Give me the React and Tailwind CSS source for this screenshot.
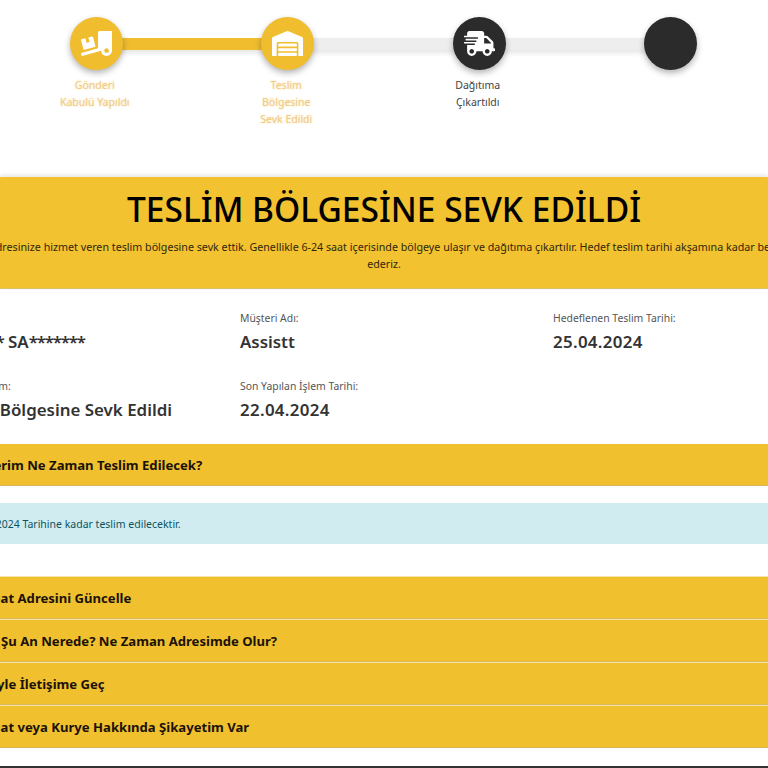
import { FaTruckLoading, FaWarehouse, FaShippingFast } from "react-icons/fa";

const font = { fontFamily: '"Noto Sans", "Open Sans", sans-serif' };

const steps = [
  { icon: FaTruckLoading, label: ["Gönderi", "Kabulü Yapıldı"], done: true },
  { icon: FaWarehouse, label: ["Teslim", "Bölgesine", "Sevk Edildi"], done: true },
  { icon: FaShippingFast, label: ["Dağıtıma", "Çıkartıldı"], done: false },
  { label: [], done: false },
];

const Field = ({ label, value }) => (
  <div className="h-[68px] whitespace-nowrap">
    <div className="text-[10.4px] leading-[18px] text-[#555]">{label}</div>
    <div className="mt-[3px] text-[16.9px] leading-[24px] font-semibold text-[#333]">{value}</div>
  </div>
);

const Row = ({ children, lower }) => (
  <div
    className={`bg-[#f0c02f] border-b border-[#d9b75a] pt-[2px] flex items-center text-[13.1px] font-bold text-[#1c1208] whitespace-nowrap ${
      lower ? "h-[43px] border-t border-t-[#f6e3a6]" : "h-[42px]"
    }`}
  >
    <span className="ml-[-41px]">{children}</span>
  </div>
);

export default function App() {
  return (
    <div className="h-[768px] w-full overflow-hidden bg-white" style={font}>
      <div className="h-[177px] pt-[17px] flex">
        <div className="relative flex ml-[0.5px]">
          {steps.map((step, i) => (
            <div key={i} className="relative w-[191.5px] flex flex-col items-center">
              {i < 3 && (
                <div
                  className={`absolute left-[95px] top-[21px] h-[12px] w-[191.5px] shadow-[0_3px_5px_rgba(0,0,0,0.1)] ${
                    i < 1 ? "bg-[#f0bd2f]" : "bg-[#eeeeee]"
                  }`}
                />
              )}
              <div
                className={`relative w-[53px] h-[53px] rounded-full flex items-center justify-center text-white shadow-[0_3px_6px_rgba(0,0,0,0.3)] ${
                  step.done ? "bg-[#f0bd2f]" : "bg-[#2b2b2b]"
                }`}
              >
                {step.icon && <step.icon className="w-[31px] h-[31px]" />}
              </div>
              <div
                className={`mt-[7px] mr-[3px] text-center text-[10.5px] leading-[17px] ${
                  step.done
                    ? "text-[#f1cb85] [text-shadow:0_0_2px_rgba(240,190,60,0.5)]"
                    : "text-[#444]"
                }`}
              >
                {step.label.map((line) => (
                  <div key={line}>{line}</div>
                ))}
              </div>
            </div>
          ))}
        </div>
      </div>

      <div className="h-[112px] bg-[#f2c230] border-b border-[#dcc06a] shadow-[0_-2px_4px_rgba(0,0,0,0.1)] flex flex-col items-center overflow-hidden">
        <h1 className="mt-[10px] text-[33.5px] leading-[44px] font-medium text-black whitespace-nowrap">
          TESLİM BÖLGESİNE SEVK EDİLDİ
        </h1>
        <p className="mt-[8px] text-[10.7px] leading-[16.5px] text-[#33260a] text-center whitespace-nowrap">
          Gönderinizi adresinize hizmet veren teslim bölgesine sevk ettik. Genellikle 6-24 saat içerisinde bölgeye ulaşır ve dağıtıma çıkartılır. Hedef teslim tarihi akşamına kadar beklemenizi rica
          <br />
          ederiz.
        </p>
      </div>

      <div className="pt-[20px] ml-[-57px] grid grid-cols-[297px_313px_313px] h-[155px] content-start">
        <Field
          label="Gönderici :"
          value={
            <>
              YA<span className="tracking-[-1.2px]">*****</span> SA<span className="tracking-[-1.2px]">*******</span>
            </>
          }
        />
        <Field label="Müşteri Adı:" value="Assistt" />
        <Field label="Hedeflenen Teslim Tarihi:" value={<span className="tracking-[0.3px]">25.04.2024</span>} />
        <Field label="Mevcut İşlem:" value="Teslim Bölgesine Sevk Edildi" />
        <Field label="Son Yapılan İşlem Tarihi:" value={<span className="tracking-[0.3px]">22.04.2024</span>} />
      </div>

      <Row>Gönderim Ne Zaman Teslim Edilecek?</Row>

      <div className="mt-[17px] h-[41px] pt-[2px] bg-[#d1ecf1] flex items-center text-[10.5px] text-[#0c5460] whitespace-nowrap">
        <span className="ml-[-34px]">25.04.2024 Tarihine kadar teslim edilecektir.</span>
      </div>

      <div className="mt-[32px] flex flex-col">
        <Row lower>Teslimat Adresini Güncelle</Row>
        <Row lower>Kargo Şu An Nerede? Ne Zaman Adresimde Olur?</Row>
        <Row lower>Kuryeyle İletişime Geç</Row>
        <Row lower>Teslimat veya Kurye Hakkında Şikayetim Var</Row>
      </div>

      <div className="mt-[18px] h-[2px] bg-[#333]" />
    </div>
  );
}
